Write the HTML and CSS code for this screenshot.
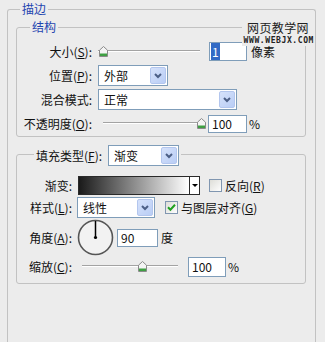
FILE: index.html
```html
<!DOCTYPE html>
<html>
<head>
    <meta charset="utf-8">
    <title>描边</title>
    <link rel="stylesheet" href="styles.css">
</head>
<body>

    <fieldset class="panel">
        <legend class="title">描边</legend>

        <div class="mark">
            <div class="mark-cn">网页教学网</div>
            <div class="mark-en">WWW.WEBJX.COM</div>
        </div>

        <!-- 结构 -->
        <fieldset class="group struct">
            <legend class="title title-in">结构</legend>
            <div class="rows">
                <span class="lbl">大小(<u>S</u>):</span>
                <div class="ctl">
                    <div class="slider s-size">
                        <svg class="thumb" style="left:1px" width="9" height="11" viewBox="0 0 9 11"><path d="M0.5 4.2 L4.5 0.5 L8.5 4.2 V10.5 H0.5 Z" fill="#f4f4f4" stroke="#8a8a8a"/><rect x="1" y="7.5" width="7" height="2.5" fill="#3fa043"/></svg>
                    </div>
                    <div class="field f-size"><span class="hl">1</span></div>
                    <span class="unit u-px">像素</span>
                </div>

                <span class="lbl">位置(<u>P</u>):</span>
                <div class="ctl">
                    <div class="select sel-pos">
                        <span>外部</span>
                        <div class="arrow"><svg width="8" height="6" viewBox="0 0 8 6"><polyline points="1,1 4,4 7,1" fill="none" stroke="#4c5f86" stroke-width="2"/></svg></div>
                    </div>
                </div>

                <span class="lbl">混合模式:</span>
                <div class="ctl">
                    <div class="select sel-mode">
                        <span>正常</span>
                        <div class="arrow"><svg width="8" height="6" viewBox="0 0 8 6"><polyline points="1,1 4,4 7,1" fill="none" stroke="#4c5f86" stroke-width="2"/></svg></div>
                    </div>
                </div>

                <span class="lbl">不透明度(<u>O</u>):</span>
                <div class="ctl">
                    <div class="slider s-opacity">
                        <svg class="thumb" style="left:94px" width="9" height="11" viewBox="0 0 9 11"><path d="M0.5 4.2 L4.5 0.5 L8.5 4.2 V10.5 H0.5 Z" fill="#f4f4f4" stroke="#8a8a8a"/><rect x="1" y="7.5" width="7" height="2.5" fill="#3fa043"/></svg>
                    </div>
                    <div class="field f-opacity">100</div>
                    <span class="unit u-pct">%</span>
                </div>
            </div>
        </fieldset>

        <!-- 填充 -->
        <fieldset class="group fill">
            <legend class="fill-legend">
                <div class="legend-row">
                    <span class="legend-lbl">填充类型(<u>F</u>):</span>
                    <div class="select sel-fill">
                        <span>渐变</span>
                        <div class="arrow"><svg width="8" height="6" viewBox="0 0 8 6"><polyline points="1,1 4,4 7,1" fill="none" stroke="#4c5f86" stroke-width="2"/></svg></div>
                    </div>
                </div>
            </legend>

            <div class="frow r-grad">
                <span class="lbl">渐变:</span>
                <div class="grad">
                    <div class="grad-fill"></div>
                    <div class="grad-btn"><span class="tri"></span></div>
                </div>
                <label class="check c-rev">
                    <svg width="13" height="13" viewBox="0 0 13 13"><defs><linearGradient id="cb1" x1="0" y1="0" x2="1" y2="1"><stop offset="0" stop-color="#dcdcd6"/><stop offset="1" stop-color="#ffffff"/></linearGradient></defs><rect x="0.5" y="0.5" width="12" height="12" fill="url(#cb1)" stroke="#8096b0"/></svg>
                    <span>反向(<u>R</u>)</span>
                </label>
            </div>

            <div class="frow r-style">
                <span class="lbl">样式(<u>L</u>):</span>
                <div class="select sel-style">
                    <span>线性</span>
                    <div class="arrow"><svg width="8" height="6" viewBox="0 0 8 6"><polyline points="1,1 4,4 7,1" fill="none" stroke="#4c5f86" stroke-width="2"/></svg></div>
                </div>
                <label class="check c-align">
                    <svg width="13" height="13" viewBox="0 0 13 13"><defs><linearGradient id="cb2" x1="0" y1="0" x2="1" y2="1"><stop offset="0" stop-color="#dcdcd6"/><stop offset="1" stop-color="#ffffff"/></linearGradient></defs><rect x="0.5" y="0.5" width="12" height="12" fill="url(#cb2)" stroke="#8096b0"/><path d="M3 6.3 L5.4 8.8 L10 3.8" fill="none" stroke="#21a121" stroke-width="2"/></svg>
                    <span>与图层对齐(<u>G</u>)</span>
                </label>
            </div>

            <div class="frow r-angle">
                <span class="lbl">角度(<u>A</u>):</span>
                <svg class="dial" width="37" height="37" viewBox="0 0 37 37">
                    <circle cx="18.5" cy="18.5" r="17" fill="#f2f2f2" stroke="#555" stroke-width="1.6"/>
                    <line x1="18.5" y1="2" x2="18.5" y2="18.5" stroke="#000" stroke-width="1.5"/>
                    <circle cx="18.5" cy="18.5" r="1.6" fill="#000"/>
                </svg>
                <div class="field f-angle">90</div>
                <span class="unit u-deg">度</span>
            </div>

            <div class="frow r-scale">
                <span class="lbl">缩放(<u>C</u>):</span>
                <div class="slider s-scale">
                    <svg class="thumb" style="left:56px" width="9" height="11" viewBox="0 0 9 11"><path d="M0.5 4.2 L4.5 0.5 L8.5 4.2 V10.5 H0.5 Z" fill="#f4f4f4" stroke="#8a8a8a"/><rect x="1" y="7.5" width="7" height="2.5" fill="#3fa043"/></svg>
                </div>
                <div class="field f-scale">100</div>
                <span class="unit u-pct">%</span>
            </div>
        </fieldset>
    </fieldset>

</body>
</html>
```

FILE: styles.css
```css
body {
    margin: 0;
    width: 325px;
    height: 342px;
    overflow: hidden;
    background: #ececec;
    font-family: "Noto Sans CJK SC", sans-serif;
    font-size: 12px;
    line-height: 14px;
    color: #111;
}

fieldset {
    border: 1px solid #c2c2c2;
    border-radius: 3px;
    padding: 0;
    min-width: 0;
}

/* outer box runs off the bottom of the window, so no bottom edge */
.panel {
    position: relative;
    box-sizing: border-box;
    margin: 2px 9px 0 7px;
    height: 340px;
    border-bottom: none;
    border-radius: 3px 3px 0 0;
}

.title {
    margin-left: 12px;
    padding: 0 2px;
    height: 14px;
    color: #1f45b0;
}

    .title-in {
        margin-left: 13px;
    }

/* watermark sits over the border lines */
.mark {
    position: absolute;
    top: 5px;
    right: 1px;
    width: 72px;
    height: 25px;
    background: #ececec;
    text-align: right;
}

.mark-cn {
    font-size: 12px;
    line-height: 14px;
    letter-spacing: 0.4px;
    padding-right: 5px;
    color: #222;
}

.mark-en {
    margin-top: 2px;
    font-family: "DejaVu Sans Mono", monospace;
    font-weight: bold;
    font-size: 8px;
    line-height: 8px;
    letter-spacing: 0.6px;
    color: #222;
}

.group {
    margin-left: 8px;
    margin-right: 9px;
}

.struct {
    margin-top: 4px;
    padding: 7px 0 2px;
}

.rows {
    display: grid;
    grid-template-columns: 75px 1fr;
    grid-auto-rows: 21px;
    column-gap: 6px;
    row-gap: 3px;
    align-items: center;
}

.lbl {
    text-align: right;
    white-space: nowrap;
}

.ctl {
    display: flex;
    align-items: center;
}

/* slider */
.slider {
    position: relative;
    height: 11px;
    flex: none;
}

    .slider::before {
        content: "";
        position: absolute;
        left: 0;
        right: 0;
        top: 4px;
        height: 1px;
        background: #a3a3a3;
        border-bottom: 1px solid #fff;
    }

.thumb {
    position: absolute;
    top: 0;
}

.s-size {
    width: 102px;
}

.s-opacity {
    width: 102px;
    margin-left: 5px;
}

.s-scale {
    width: 96px;
    margin-left: 5px;
}

/* text fields */
.field {
    box-sizing: border-box;
    border: 1px solid #7f9db9;
    background: #fff;
    padding-left: 3px;
    display: flex;
    align-items: center;
    flex: none;
}

.f-size {
    width: 38px;
    height: 19px;
    margin-left: 9px;
    padding-left: 1px;
}

.hl {
    background: #316ac5;
    color: #fff;
    padding: 1px 1px;
    line-height: 15px;
}

.f-opacity {
    width: 39px;
    height: 18px;
    margin-left: 3px;
}

.f-angle {
    width: 41px;
    height: 18px;
    margin-left: 3px;
}

.f-scale {
    width: 38px;
    height: 20px;
    margin-left: 10px;
}

.unit {
    flex: none;
}

.u-px {
    margin-left: 4px;
}

.u-pct {
    margin-left: 2px;
}

.u-deg {
    margin-left: 3px;
}

/* drop-down */
.select {
    box-sizing: border-box;
    height: 21px;
    border: 1px solid #7f9db9;
    background: #fff;
    display: flex;
    align-items: center;
    padding-left: 5px;
    flex: none;
}

    .select span {
        flex: 1;
    }

.arrow {
    box-sizing: border-box;
    width: 16px;
    height: 17px;
    margin-right: 1px;
    background: linear-gradient(135deg, #d6e2fb, #b9cdf5);
    border: 1px solid #b3c6ee;
    border-radius: 2px;
    display: flex;
    align-items: center;
    justify-content: center;
}

.sel-pos {
    width: 70px;
}

.sel-mode {
    width: 139px;
}

.sel-fill {
    width: 71px;
}

.sel-style {
    width: 78px;
}

/* fill group */
.fill {
    margin-top: 5px;
    padding: 10px 0 6px;
}

.fill-legend {
    margin-left: 17px;
    padding: 0 2px;
    height: 24px;
}

.legend-row {
    display: flex;
    align-items: flex-end;
    height: 24px;
}

.legend-lbl {
    line-height: 21px;
    margin-right: 6px;
}

.frow {
    display: flex;
    align-items: center;
}

    .frow .lbl {
        width: 55px;
        margin-right: 5px;
        flex: none;
    }

.r-grad {
    height: 19px;
}

.r-style {
    height: 21px;
    margin-top: 2px;
}

.r-angle {
    height: 37px;
    margin-top: 1px;
}

.r-scale {
    height: 21px;
}

.grad {
    box-sizing: border-box;
    width: 122px;
    height: 19px;
    margin-left: 1px;
    border: 1px solid #2a2a2a;
    display: flex;
    flex: none;
}

.grad-fill {
    flex: 1;
    background: linear-gradient(to right, #1a1a1a, #ffffff);
}

.grad-btn {
    width: 9px;
    border-left: 1px solid #2a2a2a;
    background: #fff;
    display: flex;
    align-items: center;
    justify-content: center;
}

.tri {
    width: 0;
    height: 0;
    border-left: 3px solid transparent;
    border-right: 3px solid transparent;
    border-top: 3px solid #000;
}

.check {
    display: flex;
    align-items: center;
    flex: none;
}

    .check span {
        margin-left: 3px;
    }

.c-rev {
    margin-left: 9px;
}

.c-align {
    margin-left: 10px;
}

.dial {
    flex: none;
}
```
